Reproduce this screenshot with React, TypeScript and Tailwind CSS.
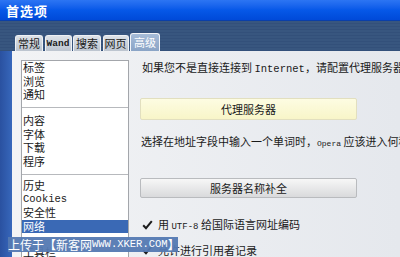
const CJK = "font-['Noto_Sans_CJK_SC','Noto_Sans',sans-serif]"
const MONO = "font-['Liberation_Mono',monospace]"

const TABS = [
  { label: '常规', w: 'w-[28px]' },
  { label: 'Wand', w: 'w-[27px]', mono: true },
  { label: '搜索', w: 'w-[28px]' },
  { label: '网页', w: 'w-[26px]' },
]

const SECTIONS = [
  { items: ['标签', '浏览', '通知'], cls: 'pt-0 pb-[5.5px]' },
  { items: ['内容', '字体', '下载', '程序'], cls: 'pt-[6px] pb-[6px]' },
  { items: ['历史', 'Cookies', '安全性', '网络'], cls: 'pt-[4px] pb-[6px]' },
  { items: ['工具栏'], cls: 'pt-[6px]' },
]

function Check() {
  return (
    <svg width="11" height="10" viewBox="0 0 11 10" className="shrink-0">
      <path d="M1.2 5.2 L4 8.2 L9.8 1.2" fill="none" stroke="#1c1c1c" strokeWidth="2" />
    </svg>
  )
}

export default function App() {
  return (
    <div className={`relative w-[400px] h-[257px] overflow-hidden bg-[#36547f] ${CJK} text-[11px] text-[#1a1a1a]`}>
      {/* title bar */}
      <div className="h-[21px] flex items-center pl-[6px] bg-gradient-to-b from-[#2c75f3] via-[#0658e8] to-[#0049d8] border-b border-[#0a3fa8] text-white font-bold text-[13px] tracking-[1px] leading-none">
        首选项
      </div>

      {/* tab strip */}
      <div className="h-[30px] flex items-end gap-[1.5px] pl-[15px] bg-[repeating-linear-gradient(180deg,#38567f_0px,#38567f_2px,#33507a_2px,#33507a_3px)]">
        {TABS.map((t) => (
          <div
            key={t.label}
            className={`${t.w} shrink-0 h-[16px] flex items-center justify-center rounded-t-[3px] border border-b-0 border-[#eef1f5] bg-gradient-to-b from-[#dde2e8] to-[#bcc4cf] leading-none ${t.mono ? `${MONO} text-[9.5px] font-bold` : 'text-[11px]'}`}
          >
            {t.label}
          </div>
        ))}
        <div className="w-[30px] shrink-0 h-[18px] flex items-center justify-center rounded-t-[3px] border border-b-0 border-[#f3f5f8] bg-gradient-to-b from-[#a6bcd8] to-[#8aa4c6] text-white text-[11px] leading-none">
          高级
        </div>
      </div>

      <div className="flex h-[206px]">
        {/* window left border */}
        <div className="w-[12px] shrink-0 bg-gradient-to-r from-[#2a51a0] to-[#3767bb]" />

        {/* panel */}
        <div className="flex-1 min-w-0 flex bg-gradient-to-r from-[#f2f3f5] to-[#e5e8ed]">
          <div className="ml-[9px] mt-[9px] w-[108px] shrink-0 self-start bg-white border border-[#a3a6ab]">
            {SECTIONS.map((s, i) => (
              <div key={i} className={`${s.cls} ${i > 0 ? 'border-t border-[#b7b9bd]' : ''}`}>
                {s.items.map((item) => (
                  <div
                    key={item}
                    className={`h-[13.5px] leading-[13.5px] pl-[1px] whitespace-nowrap ${item === '网络' ? 'bg-[#3a69b5] text-white' : ''} ${item === 'Cookies' ? `${MONO} text-[10.5px]` : ''}`}
                  >
                    {item}
                  </div>
                ))}
              </div>
            ))}
          </div>

          <div className="ml-[11px] shrink-0 flex flex-col whitespace-nowrap">
            <div className="mt-[9px] ml-[2px] h-[14px] leading-[14px]">
              如果您不是直接连接到 <span className={`${MONO} text-[10.5px]`}>Internet</span>，请配置代理服务器
            </div>
            <div className="mt-[24px] w-[217px] h-[24px] flex items-center justify-center rounded-[2px] border border-[#e2dfbf] bg-gradient-to-b from-[#fdfce2] to-[#f8f5c8]">
              代理服务器
            </div>
            <div className="mt-[14px] ml-[1px] h-[14px] leading-[14px]">
              选择在地址字段中输入一个单词时，<span className={`${MONO} text-[8px]`}>Opera</span> 应该进入何种网址
            </div>
            <div className="mt-[30px] w-[217px] h-[21px] flex items-center justify-center rounded-[2px] border border-[#b9bbbe] bg-gradient-to-b from-[#f7f7f7] to-[#d9dadc]">
              服务器名称补全
            </div>
            <div className="mt-[20px] ml-[2px] h-[14px] flex items-center gap-[5px]">
              <Check />
              <span>
                用 <span className={`${MONO} text-[9px]`}>UTF-8</span> 给国际语言网址编码
              </span>
            </div>
            <div className="mt-[11px] ml-[2px] h-[14px] flex items-center gap-[5px]">
              <Check />
              <span>允许进行引用者记录</span>
            </div>
          </div>
        </div>
      </div>

      {/* upload watermark */}
      <div className="absolute left-[8px] top-[237px] w-[170px] h-[15px] flex items-center bg-[#5479b2]/95 text-white text-[12px] leading-none whitespace-nowrap">
        上传于【新客网 <span className={`${MONO} text-[10.5px]`}>WWW.XKER.COM</span>】
      </div>
    </div>
  )
}
